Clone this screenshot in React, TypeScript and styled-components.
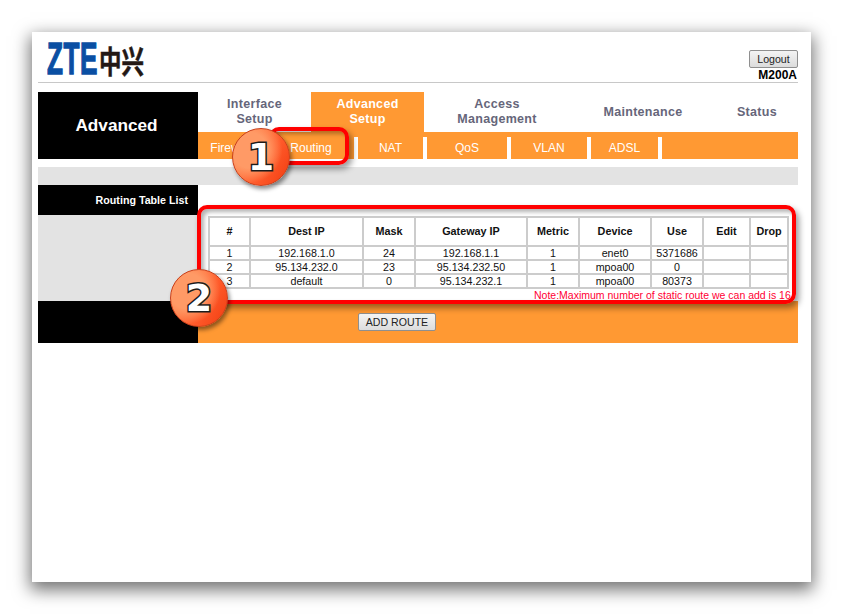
import React from "react";
import styled, { createGlobalStyle } from "styled-components";

const GlobalStyle = createGlobalStyle`
    html, body {
        margin: 0;
        padding: 0;
        background: #fff;
    }
    body {
        font-family: "Liberation Sans", Arial, sans-serif;
        font-size: 11px;
        overflow: hidden;
    }
`;

const orange = "#ff9933";
const panelGray = "#e3e3e3";

const Stage = styled.div`
    width: 843px;
    height: 614px;
    padding: 32px;
    box-sizing: border-box;
`;

const PageWindow = styled.div`
    position: relative;
    width: 779px;
    height: 550px;
    box-sizing: border-box;
    padding: 0 13px 0 6px;
    background: #fff;
    box-shadow: 0 6px 16px 2px rgba(0, 0, 0, 0.55);
`;

const Header = styled.div`
    height: 50px;
    border-bottom: 1px solid #c8c8c8;
    display: flex;
    justify-content: space-between;
    margin-bottom: 9px;
`;

const Logo = styled.div`
    margin: 10px 0 0 9px;
    height: 34px;
    display: flex;
    align-items: center;
`;

const LogoLatin = styled.span`
    display: block;
    width: 52px;
    font-size: 45px;
    line-height: 34px;
    font-weight: 700;
    color: #0a4fa3;
    letter-spacing: 1px;
    -webkit-text-stroke: 1.4px #0a4fa3;
    transform: scaleX(0.58);
    transform-origin: left center;
    white-space: nowrap;
`;

const LogoHan = styled.span`
    display: block;
    font-family: "Noto Sans CJK SC", sans-serif;
    font-size: 22.5px;
    line-height: 34px;
    font-weight: 700;
    color: #231815;
    -webkit-text-stroke: 0.4px #231815;
    transform: scaleY(1.35);
    white-space: nowrap;
`;

const HeaderRight = styled.div`
    display: flex;
    flex-direction: column;
    align-items: flex-end;
    padding-top: 18px;
`;

const GrayButton = styled.button<{ $w: number; $h: number }>`
    width: ${(p) => p.$w}px;
    height: ${(p) => p.$h}px;
    padding: 0;
    font-family: inherit;
    font-size: 10.6px;
    color: #222;
    background: linear-gradient(#f4f4f4, #dcdcdc);
    border: 1px solid #8f8f8f;
    border-radius: 2px;
`;

const ModelName = styled.div`
    font-size: 12px;
    line-height: 12px;
    font-weight: 700;
    color: #000;
    margin: 1px 1px 0 0;
`;

const NavBlock = styled.div`
    display: grid;
    grid-template-columns: 160px 1fr;
    margin-bottom: 8px;
`;

const SectionTitle = styled.div`
    background: #000;
    color: #fff;
    font-size: 17.2px;
    font-weight: 700;
    display: flex;
    align-items: center;
    justify-content: center;
    padding-right: 3px;
`;

const NavColumn = styled.div`
    display: flex;
    flex-direction: column;
`;

const TabRow = styled.div`
    display: flex;
    height: 40px;
`;

const Tab = styled.div<{ $w: number; $active?: boolean }>`
    width: ${(p) => p.$w}px;
    display: flex;
    align-items: center;
    justify-content: center;
    text-align: center;
    font-size: 12.5px;
    line-height: 15px;
    font-weight: 700;
    letter-spacing: 0.3px;
    color: ${(p) => (p.$active ? "#fff" : "#66667a")};
    background: ${(p) => (p.$active ? orange : "#fff")};
`;

const SubRow = styled.div`
    display: flex;
    height: 27px;
    background: ${orange};
    padding-top: 5px;
    box-sizing: border-box;
`;

const SubTab = styled.div<{ $w: number }>`
    width: ${(p) => p.$w}px;
    box-sizing: border-box;
    border-right: 4px solid #fff;
    color: #fff;
    font-size: 12px;
    display: flex;
    align-items: center;
    justify-content: center;
`;

const GrayBar = styled.div`
    height: 18px;
    background: ${panelGray};
`;

const ContentBlock = styled.div`
    display: grid;
    grid-template-columns: 160px 1fr;
`;

const SideColumn = styled.div`
    display: flex;
    flex-direction: column;
`;

const SideHead = styled.div`
    height: 30px;
    background: #000;
    color: #fff;
    font-weight: 700;
    font-size: 10.7px;
    display: flex;
    align-items: center;
    justify-content: flex-end;
    padding-right: 10px;
`;

const SideFill = styled.div`
    height: 86px;
    background: ${panelGray};
`;

const TableColumn = styled.div`
    padding: 31px 10px 0 10px;
    height: 116px;
    box-sizing: border-box;
    min-width: 0;
`;

const RouteTable = styled.table`
    width: 579px;
    table-layout: fixed;
    border-collapse: collapse;
    color: #111;
    font-size: 10.7px;
`;

const HeadCell = styled.th`
    height: 26px;
    padding: 0 0 1px;
    border: 2px solid #cccccc;
    font-size: 10.8px;
    font-weight: 700;
    color: #111;
`;

const BodyCell = styled.td`
    height: 12px;
    padding: 0;
    line-height: 12px;
    border: 2px solid #cccccc;
    text-align: center;
`;

const Note = styled.div`
    margin: 0 0 0 326px;
    width: 259px;
    overflow: hidden;
    white-space: nowrap;
    font-size: 10.5px;
    line-height: 12px;
    color: #ff0033;
`;

const Footer = styled.div`
    display: grid;
    grid-template-columns: 160px 1fr;
    height: 42px;
`;

const FooterBlack = styled.div`
    background: #000;
`;

const FooterOrange = styled.div`
    background: ${orange};
    padding: 12px 0 0 160px;
`;

const Callout = styled.div<{ $x: number; $y: number; $w: number; $h: number }>`
    position: absolute;
    left: ${(p) => p.$x}px;
    top: ${(p) => p.$y}px;
    width: ${(p) => p.$w}px;
    height: ${(p) => p.$h}px;
    box-sizing: border-box;
    border: 4px solid #ff0000;
    border-radius: 10px;
    box-shadow: 3px 4px 6px rgba(0, 0, 0, 0.4), inset 3px 3px 4px rgba(0, 0, 0, 0.3);
`;

const Badge = styled.div<{ $x: number; $y: number }>`
    position: absolute;
    left: ${(p) => p.$x}px;
    top: ${(p) => p.$y}px;
    width: 58px;
    height: 58px;
    border-radius: 50%;
    background:
        radial-gradient(circle at 30% 38%, #ff9a66 0 34%, rgba(255, 120, 70, 0) 62%),
        linear-gradient(120deg, #ff7a45 30%, #ff5a2a 62%, #f03c10 100%);
    border: 1px solid #c8401c;
    box-sizing: border-box;
    box-shadow: 2px 3px 4px rgba(0, 0, 0, 0.45);
    display: flex;
    align-items: center;
    justify-content: center;
    font-family: "DejaVu Sans", sans-serif;
    font-size: 38px;
    font-weight: 700;
    line-height: 58px;
    color: #fff;
    -webkit-text-stroke: 3px #1c1c1c;
    paint-order: stroke fill;
`;

const tabs = [
    { label: ["Interface", "Setup"], w: 113 },
    { label: ["Advanced", "Setup"], w: 113, active: true },
    { label: ["Access", "Management"], w: 146 },
    { label: ["Maintenance"], w: 146 },
    { label: ["Status"], w: 82 },
];

const subTabs = [
    { label: "Firewall", w: 70 },
    { label: "Routing", w: 90 },
    { label: "NAT", w: 69 },
    { label: "QoS", w: 84 },
    { label: "VLAN", w: 80 },
    { label: "ADSL", w: 71 },
];

const columns = [
    { title: "#", w: 41 },
    { title: "Dest IP", w: 113 },
    { title: "Mask", w: 52 },
    { title: "Gateway IP", w: 112 },
    { title: "Metric", w: 52 },
    { title: "Device", w: 72 },
    { title: "Use", w: 52 },
    { title: "Edit", w: 47 },
    { title: "Drop", w: 38 },
];

const routes = [
    ["1", "192.168.1.0", "24", "192.168.1.1", "1", "enet0", "5371686", "", ""],
    ["2", "95.134.232.0", "23", "95.134.232.50", "1", "mpoa00", "0", "", ""],
    ["3", "default", "0", "95.134.232.1", "1", "mpoa00", "80373", "", ""],
];

function App() {
    return (
        <Stage>
            <GlobalStyle />
            <PageWindow>
                <Header>
                    <Logo>
                        <LogoLatin>ZTE</LogoLatin>
                        <LogoHan>中兴</LogoHan>
                    </Logo>
                    <HeaderRight>
                        <GrayButton $w={49} $h={18}>Logout</GrayButton>
                        <ModelName>M200A</ModelName>
                    </HeaderRight>
                </Header>
                <NavBlock>
                    <SectionTitle>Advanced</SectionTitle>
                    <NavColumn>
                        <TabRow>
                            {tabs.map((t) => (
                                <Tab key={t.label[0]} $w={t.w} $active={t.active}>
                                    <div>
                                        {t.label.map((line) => (
                                            <div key={line}>{line}</div>
                                        ))}
                                    </div>
                                </Tab>
                            ))}
                        </TabRow>
                        <SubRow>
                            {subTabs.map((t) => (
                                <SubTab key={t.label} $w={t.w}>{t.label}</SubTab>
                            ))}
                        </SubRow>
                    </NavColumn>
                </NavBlock>
                <GrayBar />
                <ContentBlock>
                    <SideColumn>
                        <SideHead>Routing Table List</SideHead>
                        <SideFill />
                    </SideColumn>
                    <TableColumn>
                        <RouteTable>
                            <colgroup>
                                {columns.map((c) => (
                                    <col key={c.title} width={c.w} />
                                ))}
                            </colgroup>
                            <thead>
                                <tr>
                                    {columns.map((c) => (
                                        <HeadCell key={c.title}>{c.title}</HeadCell>
                                    ))}
                                </tr>
                            </thead>
                            <tbody>
                                {routes.map((r) => (
                                    <tr key={r[0]}>
                                        {r.map((v, i) => (
                                            <BodyCell key={i}>{v}</BodyCell>
                                        ))}
                                    </tr>
                                ))}
                            </tbody>
                        </RouteTable>
                        <Note>Note:Maximum number of static route we can add is 16</Note>
                    </TableColumn>
                </ContentBlock>
                <Footer>
                    <FooterBlack />
                    <FooterOrange>
                        <GrayButton $w={78} $h={18}>ADD ROUTE</GrayButton>
                    </FooterOrange>
                </Footer>
                <Callout $x={237} $y={95} $w={80} $h={38} />
                <Callout $x={165} $y={173} $w={599} $h={99} />
                <Badge $x={200} $y={96}>1</Badge>
                <Badge $x={138} $y={237}>2</Badge>
            </PageWindow>
        </Stage>
    );
}

export default App;
